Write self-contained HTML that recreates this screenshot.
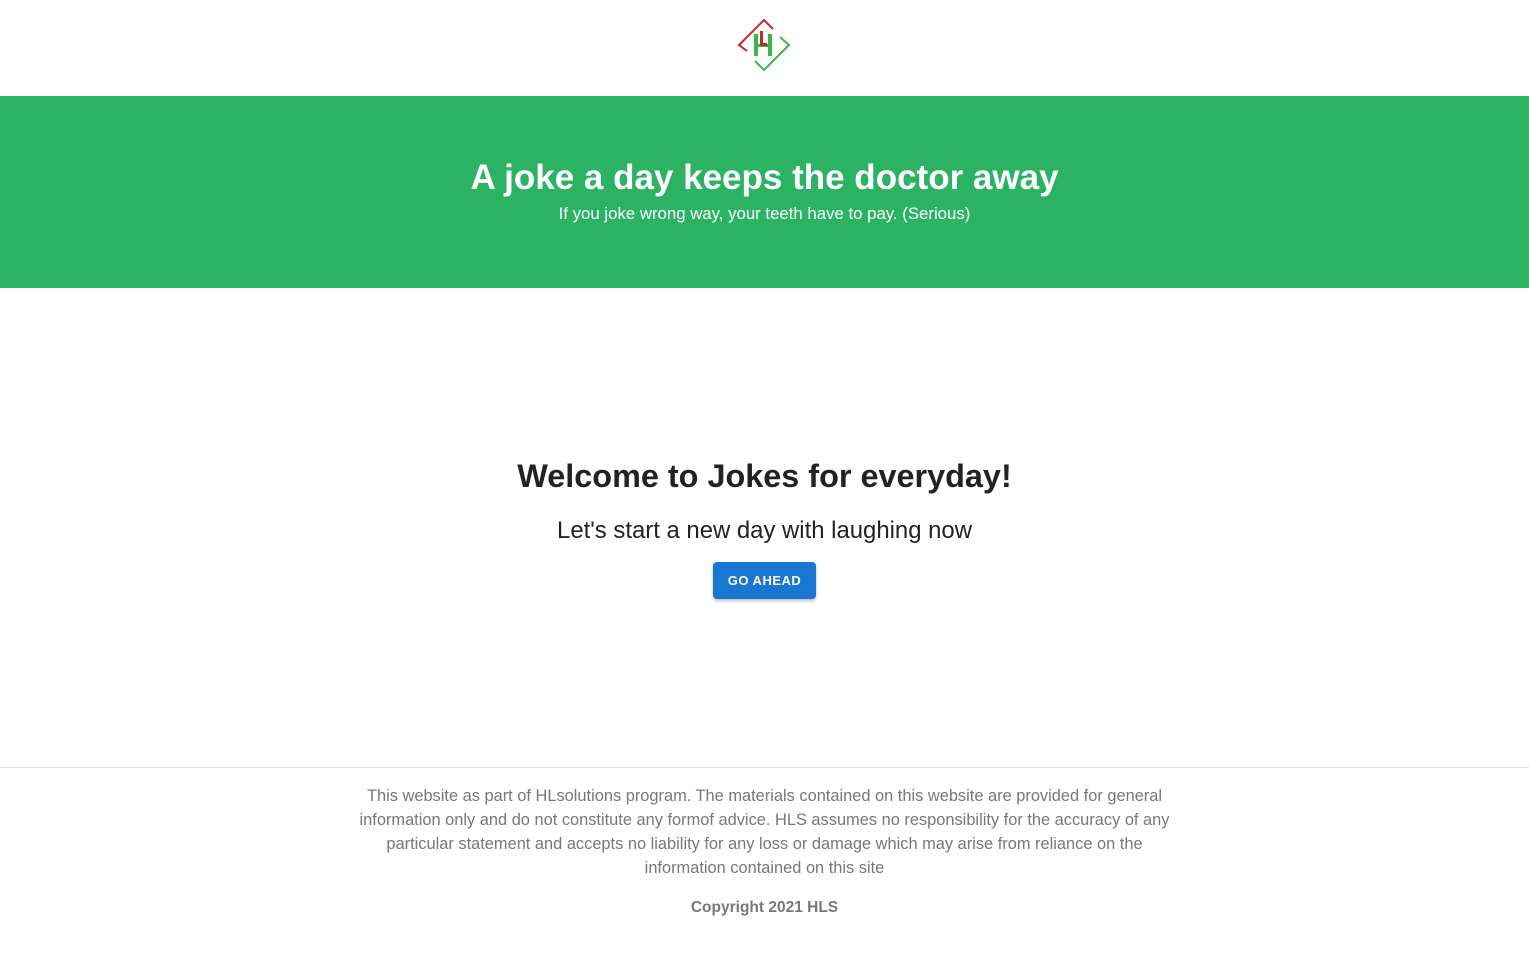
<!DOCTYPE html>
<html><head><style>
body{margin:0;width:1529px;height:959px;background:#fff;font-family:"Liberation Sans",sans-serif;overflow:hidden}
.top{height:96px;position:relative}
.hero{height:192px;background:#2bb363;color:#fff;text-align:center;position:relative}
.hero h1{margin:0;font-size:35px;font-weight:600;position:absolute;width:100%;top:62px}
.hero p{position:absolute;top:108px;width:100%;margin:0;font-size:16.8px}
.main{position:relative;height:479px;text-align:center}
.main h2{position:absolute;top:170px;width:100%;margin:0;font-size:32.4px;color:#222;font-weight:bold}
.main .sub{position:absolute;top:229px;width:100%;font-size:23.9px;color:#222}
.btn{position:absolute;left:713px;top:274px;width:103px;height:37px;background:#1976d2;color:#fff;border-radius:4px;font-size:13px;font-weight:bold;line-height:37px;letter-spacing:0.5px;box-shadow:0 2px 3px rgba(0,0,0,.25)}
.foot{border-top:1px solid #ddd;text-align:center;color:#777;font-size:16.4px}
.foot p{width:830px;margin:16px auto 0;line-height:24px}
.foot .c{margin-top:16px;font-weight:bold;font-size:15.5px}
</style></head><body>
<div class="top">
<svg width="60" height="60" viewBox="0 0 60 60" style="position:absolute;left:734px;top:15px">
<polyline points="13,36 5,30 30,5 39,14" fill="none" stroke="#c62828" stroke-width="2"/>
<polyline points="46,22 55,30 30,55 21,46" fill="none" stroke="#3cb54a" stroke-width="2"/>
<rect x="20" y="19" width="4" height="22" fill="#3cb54a"/>
<rect x="34" y="19" width="4" height="22" fill="#3cb54a"/>
<rect x="20" y="29" width="18" height="3" fill="#3cb54a"/>
<rect x="26" y="16" width="3" height="15" fill="#c62828"/>
<rect x="26" y="28" width="7" height="3" fill="#c62828"/>
</svg>
</div>
<div class="hero">
<h1>A joke a day keeps the doctor away</h1>
<p>If you joke wrong way, your teeth have to pay. (Serious)</p>
</div>
<div class="main">
<h2>Welcome to Jokes for everyday!</h2>
<div class="sub">Let's start a new day with laughing now</div>
<div class="btn">GO AHEAD</div>
</div>
<div class="foot">
<p>This website as part of HLsolutions program. The materials contained on this website are provided for general information only and do not constitute any formof advice. HLS assumes no responsibility for the accuracy of any particular statement and accepts no liability for any loss or damage which may arise from reliance on the information contained on this site</p>
<p class="c">Copyright 2021 HLS</p>
</div>
</body></html>
